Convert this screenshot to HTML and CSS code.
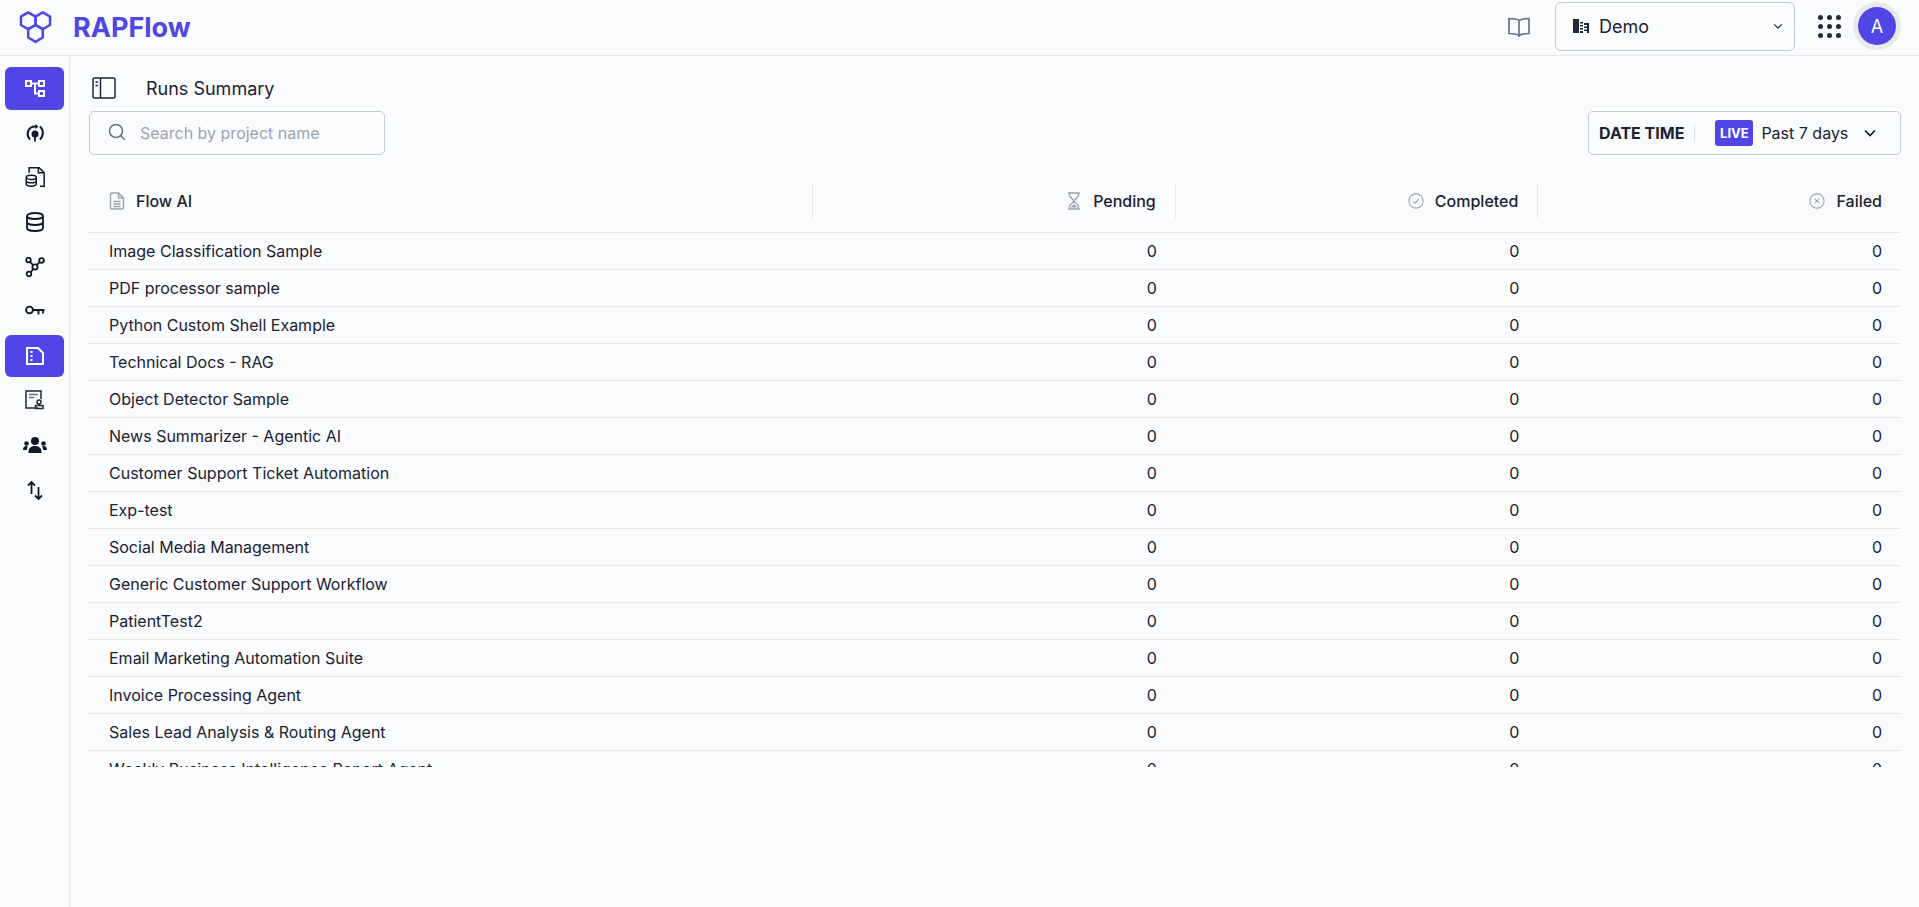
FILE: index.html
```html
<!DOCTYPE html>
<html lang="en">
<head>
    <meta charset="UTF-8">
    <meta name="viewport" content="width=device-width, initial-scale=1.0">
    <title>RAPFlow - Runs Summary</title>
    <link rel="stylesheet" href="styles.css">
</head>
<body>
    <header class="topbar">
        <div class="brand">
            <svg class="brand-logo" viewBox="0 0 34 34" fill="none" stroke="#4f46e5" stroke-width="2.6" stroke-linejoin="round">
                <path d="M9.5 1.5l7.5 4.3v8.6l-7.5 4.3L2 14.4V5.800z"/>
                <path d="M24.500 1.500l7.500 4.300v8.600l-7.500 4.300L17 14.400V5.800z"/>
                <path d="M17 14.400l7.500 4.300v8.600L17 31.800l-7.500-4.500v-8.600z"/>
            </svg>
            <span class="brand-name">RAPFlow</span>
        </div>
        <div class="topbar-actions">
            <svg class="book-icon" viewBox="0 0 24 24" fill="none" stroke="#64748b" stroke-width="1.7" stroke-linejoin="round">
                <path d="M12 5.500C10 4 7 3.500 2 3.500v15c5 0 8 .5 10 2 2-1.500 5-2 10-2v-15c-5 0-8 .5-10 2zM12 5.500v16.500"/>
            </svg>
            <div class="org-select">
                <svg class="org-icon" viewBox="0 0 16 14" fill="#1f2937">
                    <path d="M0 0h6v14H0zM7 3h3v1.500H7zM7 6h3v1.500H7zM7 9h3v1.500H7zM7 12h3v2H7zM11 4h5v10h-2v-2h-3v-1.500h3V9h-3V7.500h3V6h-3z"/>
                </svg>
                <span class="org-name">Demo</span>
                <svg class="chevron-small" viewBox="0 0 12 8" fill="none" stroke="#1f2937" stroke-width="1.500"><path d="M1.500 1.500L6 6l4.500-4.500"/></svg>
            </div>
            <div class="apps-grid">
                <i></i><i></i><i></i><i></i><i></i><i></i><i></i><i></i><i></i>
            </div>
            <div class="avatar">A</div>
        </div>
    </header>

    <div class="layout">
        <nav class="sidebar">
            <a class="nav-item active">
                <svg viewBox="0 0 20 20" fill="none" stroke="#fff" stroke-width="2"><path d="M1 3h5v5H1zM14 3h5v5h-5zM14 13h5v5h-5zM6 5.500h8M10 5.500v10h4"/></svg>
            </a>
            <a class="nav-item">
                <svg viewBox="0 0 20 20" fill="none" stroke="#111827" stroke-width="2"><path d="M5 16.500C1.500 13 2 7 6 4.500c2-1.200 4-1.300 6-.8M15 3.500c3.500 3 4 9 0 13"/><path d="M10.500 1l3 2.700-3 2.300z" fill="#111827" stroke="none"/><circle cx="10" cy="11" r="3.500" fill="#111827" stroke="none"/><path d="M10 14v4.500" stroke-width="1.800"/></svg>
            </a>
            <a class="nav-item">
                <svg viewBox="0 0 24 24" fill="none" stroke="#111827" stroke-width="1.800"><path d="M5 7V1h12l6 6v16h-5M16 1v6h7"/><ellipse cx="7.500" cy="12.500" rx="6" ry="2.500"/><path d="M1.500 12.500v8c0 1.400 2.700 2.500 6 2.500s6-1.100 6-2.500v-8M1.500 16.500c0 1.400 2.700 2.500 6 2.500s6-1.100 6-2.500"/></svg>
            </a>
            <a class="nav-item">
                <svg viewBox="0 0 20 20" fill="none" stroke="#111827" stroke-width="1.800"><ellipse cx="10" cy="4" rx="8" ry="3"/><path d="M2 4v12c0 1.700 3.600 3 8 3s8-1.300 8-3V4M2 10c0 1.700 3.600 3 8 3s8-1.300 8-3"/></svg>
            </a>
            <a class="nav-item">
                <svg viewBox="0 0 20 20" fill="none" stroke="#111827" stroke-width="1.800"><circle cx="3.500" cy="3" r="2.300"/><circle cx="16.500" cy="3.500" r="2.300"/><circle cx="4" cy="17" r="2.300"/><circle cx="10" cy="10" r="2.600"/><path d="M5 4.800l3.200 3.400M14.800 5l-3 3.200M5.700 15.300l2.500-3.400"/></svg>
            </a>
            <a class="nav-item">
                <svg viewBox="0 0 20 12" fill="none" stroke="#111827" stroke-width="1.900"><circle cx="4.500" cy="5" r="3.400"/><path d="M8 5h11.500M13.500 5v4.500M18 5v3.500"/></svg>
            </a>
            <a class="nav-item active">
                <svg viewBox="0 0 20 20" fill="none" stroke="#fff" stroke-width="2"><path d="M2 2h11l5 5v11H2z"/><path d="M5.500 6h2M5.500 10h2M5.500 14h2" stroke-width="1.800"/></svg>
            </a>
            <a class="nav-item">
                <svg viewBox="0 0 20 20" fill="none" stroke="#1f2937" stroke-width="1.500"><path d="M13 18H1V1h15v8"/><path d="M4 4.500h9M4 7.500h5" stroke="#64748b"/><circle cx="14" cy="12" r="2"/><path d="M14 14v1.500M10.500 15.500h7.500v3h-7.500z"/></svg>
            </a>
            <a class="nav-item">
                <svg class="nav-wide" viewBox="0 0 24 16" fill="#111827"><circle cx="12" cy="4" r="4"/><path d="M5.500 16c0-5 2-7 6.500-7s6.500 2 6.500 7z"/><circle cx="3.500" cy="6.500" r="2.300"/><circle cx="20.500" cy="6.500" r="2.300"/><path d="M0 13c0-2.500 1.200-4 3.500-4 .6 0 1 .1 1.400.3-.7 1.200-1 2.400-1 3.700zM24 13c0-2.500-1.200-4-3.500-4-.6 0-1 .1-1.400.3.700 1.200 1 2.400 1 3.700z"/></svg>
            </a>
            <a class="nav-item">
                <svg viewBox="0 0 20 20" fill="none" stroke="#111827" stroke-width="1.800"><path d="M6.500 14V2M3 5.500L6.500 2 10 5.500M13.500 7v12M10 15.500l3.500 3.500 3.500-3.500"/></svg>
            </a>
        </nav>

        <main class="content">
            <div class="title-row">
                <svg class="panel-icon" viewBox="0 0 24 22" fill="none" stroke="#1f2937" stroke-width="1.500">
                    <rect x="1" y="1" width="22" height="20" rx="2"/>
                    <path d="M8.500 1v20M3.500 5h2.500M3.500 8.500h2.500"/>
                </svg>
                <h1 class="page-title">Runs Summary</h1>
            </div>

            <div class="toolbar">
                <div class="search-box">
                    <svg class="search-icon" viewBox="0 0 18 18" fill="none" stroke="#6b7280" stroke-width="1.500"><circle cx="8" cy="8" r="6.500"/><path d="M12.800 12.800l4 4"/></svg>
                    <span class="search-placeholder">Search by project name</span>
                </div>
                <div class="date-filter">
                    <span class="date-label">DATE TIME</span>
                    <span class="date-sep"></span>
                    <span class="live-badge">LIVE</span>
                    <span class="date-value">Past 7 days</span>
                    <svg class="chevron-date" viewBox="0 0 12 8" fill="none" stroke="#111827" stroke-width="1.700"><path d="M1 1.500L6 6.500l5-5"/></svg>
                </div>
            </div>

            <div class="table-wrap">
                <table class="runs-table">
                    <thead>
                        <tr>
                            <th class="col-name"><span class="th-inner">
                                <svg class="th-icon" viewBox="0 0 16 18" fill="none" stroke="#9ca3af" stroke-width="1.400"><path d="M1.500 2.500a1.500 1.500 0 0 1 1.500-1.500h6.500l5 5v9.500a1.500 1.500 0 0 1-1.500 1.500H3a1.500 1.500 0 0 1-1.500-1.500zM9.500 1v5h5M4.500 9.500h7M4.500 12h7M4.500 14.500h7"/></svg>
                                Flow AI</span></th>
                            <th><span class="th-inner th-right">
                                <svg class="th-icon" viewBox="0 0 14 18" fill="none" stroke="#9ca3af" stroke-width="1.300"><path d="M1 1h12M1 17h12M2.500 1v3L7 9l4.500 5v3M11.500 1v3L7 9l-4.500 5v3"/><path d="M3.500 15.500L7 12l3.500 3.500z" fill="#9ca3af" stroke="none"/></svg>
                                Pending</span></th>
                            <th><span class="th-inner th-right">
                                <svg class="th-icon" viewBox="0 0 18 18" fill="none" stroke="#9ca3af" stroke-width="1.200"><circle cx="9" cy="9" r="8"/><path d="M6 9.500l2 2 4-4.500"/></svg>
                                Completed</span></th>
                            <th><span class="th-inner th-right">
                                <svg class="th-icon" viewBox="0 0 18 18" fill="none" stroke="#9ca3af" stroke-width="1.200"><circle cx="9" cy="9" r="8"/><path d="M6.500 6.500l5 5M11.500 6.500l-5 5"/></svg>
                                Failed</span></th>
                        </tr>
                    </thead>
                    <tbody>
                        <tr><td>Image Classification Sample</td><td>0</td><td>0</td><td>0</td></tr>
                        <tr><td>PDF processor sample</td><td>0</td><td>0</td><td>0</td></tr>
                        <tr><td>Python Custom Shell Example</td><td>0</td><td>0</td><td>0</td></tr>
                        <tr><td>Technical Docs - RAG</td><td>0</td><td>0</td><td>0</td></tr>
                        <tr><td>Object Detector Sample</td><td>0</td><td>0</td><td>0</td></tr>
                        <tr><td>News Summarizer - Agentic AI</td><td>0</td><td>0</td><td>0</td></tr>
                        <tr><td>Customer Support Ticket Automation</td><td>0</td><td>0</td><td>0</td></tr>
                        <tr><td>Exp-test</td><td>0</td><td>0</td><td>0</td></tr>
                        <tr><td>Social Media Management</td><td>0</td><td>0</td><td>0</td></tr>
                        <tr><td>Generic Customer Support Workflow</td><td>0</td><td>0</td><td>0</td></tr>
                        <tr><td>PatientTest2</td><td>0</td><td>0</td><td>0</td></tr>
                        <tr><td>Email Marketing Automation Suite</td><td>0</td><td>0</td><td>0</td></tr>
                        <tr><td>Invoice Processing Agent</td><td>0</td><td>0</td><td>0</td></tr>
                        <tr><td>Sales Lead Analysis &amp; Routing Agent</td><td>0</td><td>0</td><td>0</td></tr>
                        <tr><td>Weekly Business Intelligence Report Agent</td><td>0</td><td>0</td><td>0</td></tr>
                    </tbody>
                </table>
            </div>
        </main>
    </div>
</body>
</html>
```

FILE: styles.css
```css
* {
    margin: 0;
    padding: 0;
    box-sizing: border-box;
}

body {
    font-family: 'Inter', 'Liberation Sans', sans-serif;
    background: #fafbfd;
    color: #1a2233;
    height: 100vh;
    overflow: hidden;
    display: flex;
    flex-direction: column;
}

/* top bar */
.topbar {
    height: 56px;
    flex: none;
    display: flex;
    align-items: center;
    justify-content: space-between;
    border-bottom: 1px solid #e5e7eb;
    padding-left: 19px;
    padding-right: 18px;
}

.brand {
    display: flex;
    align-items: center;
    gap: 21px;
    margin-top: -1px;
}

.brand-logo {
    width: 33px;
    height: 33px;
}

.brand-name {
    font-size: 27px;
    font-weight: 700;
    color: #4f46e5;
}

.topbar-actions {
    display: flex;
    align-items: center;
}

.book-icon {
    width: 24px;
    height: 24px;
    margin-right: 24px;
    margin-top: -2px;
}

.org-select {
    width: 240px;
    height: 49px;
    border: 1px solid #c4c8cf;
    border-radius: 6px;
    display: flex;
    align-items: center;
    padding: 0 11px 0 17px;
    margin-right: 23px;
    margin-top: -3px;
}

.org-icon {
    width: 16px;
    height: 14px;
    margin-right: 10px;
}

.org-name {
    font-size: 18px;
    flex: 1;
}

.chevron-small {
    width: 10px;
    height: 7px;
}

.apps-grid {
    display: grid;
    grid-template-columns: repeat(3, 5px);
    gap: 4px;
    margin-right: 17px;
    margin-top: -3px;
}

.apps-grid i {
    width: 5px;
    height: 5px;
    background: #1f2937;
    border-radius: 50%;
}

.avatar {
    width: 38px;
    height: 38px;
    border-radius: 50%;
    background: #4f46e5;
    color: #fff;
    font-size: 18px;
    display: flex;
    align-items: center;
    justify-content: center;
    box-shadow: 0 0 0 5px #e9e9ec;
    margin-right: 5px;
    margin-top: -3px;
}

/* layout */
.layout {
    flex: 1;
    display: flex;
    min-height: 0;
}

.sidebar {
    width: 70px;
    flex: none;
    border-right: 1px solid #e5e7eb;
    padding: 11px 5px 0;
    display: flex;
    flex-direction: column;
    gap: 2px;
}

.nav-item {
    height: 42.6px;
    border-radius: 6px;
    display: flex;
    align-items: center;
    justify-content: center;
}

.nav-item svg {
    width: 20px;
    height: 20px;
}

.nav-item .nav-wide {
    width: 24px;
    height: 18px;
}

.nav-item.active {
    background: #4f46e5;
}

.content {
    flex: 1;
    min-width: 0;
    padding: 0 18px 0 18px;
}

.title-row {
    height: 55px;
    display: flex;
    align-items: center;
    padding-left: 4px;
    padding-top: 9px;
}

.panel-icon {
    width: 24px;
    height: 22px;
    margin-right: 30px;
}

.page-title {
    font-size: 18px;
    font-weight: 400;
}

.toolbar {
    display: flex;
    justify-content: space-between;
    padding-left: 1px;
}

.search-box {
    width: 296px;
    height: 44px;
    border: 1px solid #c4c8cf;
    border-radius: 5px;
    display: flex;
    align-items: center;
    padding-left: 18px;
}

.search-icon {
    width: 18px;
    height: 18px;
    margin-right: 14px;
    margin-top: -2px;
}

.search-placeholder {
    font-size: 16px;
    color: #9ca3af;
}

.date-filter {
    width: 313px;
    height: 44px;
    border: 1px solid #c4c8cf;
    border-radius: 5px;
    display: flex;
    align-items: center;
    padding-left: 10px;
}

.date-label {
    font-size: 16px;
    font-weight: 700;
}

.date-sep {
    width: 1px;
    height: 16px;
    background: #d9dbe0;
    margin: 0 20px 0 10px;
}

.live-badge {
    width: 38px;
    height: 26px;
    background: #4f46e5;
    color: #fff;
    border-radius: 3px;
    font-size: 13px;
    font-weight: 700;
    display: flex;
    align-items: center;
    justify-content: center;
    margin-right: 8px;
}

.date-value {
    font-size: 16px;
}

.chevron-date {
    width: 12px;
    height: 8px;
    margin-left: 16px;
}

/* table */
.table-wrap {
    margin-top: 15px;
    height: 597px;
    overflow: hidden;
}

.runs-table {
    width: 100%;
    table-layout: fixed;
    border-collapse: collapse;
}

.runs-table th {
    height: 62px;
    font-size: 16px;
    font-weight: 500;
    text-align: right;
    padding: 0;
    border-bottom: 1px solid #e5e7eb;
}

.runs-table th.col-name {
    width: 40%;
    text-align: left;
}

.th-inner {
    height: 35px;
    display: flex;
    align-items: center;
    gap: 11px;
    padding: 0 19px;
    border-right: 1px solid #e5e7eb;
}

.col-name .th-inner {
    padding-left: 21px;
}

.th-right {
    justify-content: flex-end;
}

th:last-child .th-inner {
    border-right: none;
}

.th-icon {
    width: 16px;
    height: 18px;
}

.runs-table td {
    height: 37px;
    font-size: 16px;
    padding: 0 19px;
    text-align: right;
    border-bottom: 1px solid #e5e7eb;
}

.runs-table td:first-child {
    text-align: left;
    padding-left: 21px;
}
```
